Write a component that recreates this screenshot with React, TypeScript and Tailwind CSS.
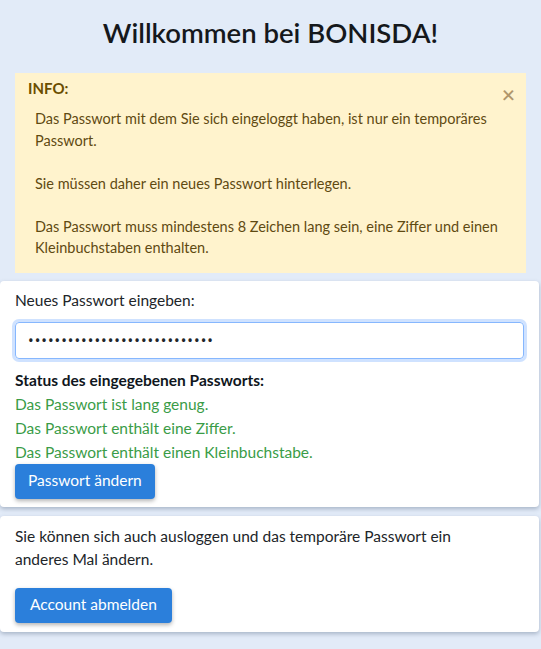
import React from "react";

const App = () => {
  const [password, setPassword] = React.useState("abcdefgh1234567890abcdefghij");

  const checks = [
    "Das Passwort ist lang genug.",
    "Das Passwort enthält eine Ziffer.",
    "Das Passwort enthält einen Kleinbuchstabe.",
  ];

  return (
    <div
      className="min-h-[649px] w-full bg-[#e2ebf8] pt-[16px] pb-4 text-[#212529]"
      style={{ fontFamily: 'Lato, "Noto Sans", sans-serif' }}
    >
      <h1 className="mb-[23px] text-center text-[27.5px] leading-[34px] font-semibold text-[#15181c]">
        Willkommen bei BONISDA!
      </h1>

      <div className="relative mx-[15px] mb-[8px] bg-[#fff3cd] px-[13px] pt-[4px] pb-[14px] text-[#664d03]">
        <div className="text-[15px] leading-[22px] font-bold text-[#6b4e00]">INFO:</div>
        <button
          type="button"
          className="absolute top-[10px] right-[11px] text-[23px] leading-none font-semibold text-[#b0966b]"
        >
          ×
        </button>
        <p className="mt-[9px] pl-[7px] pr-[10px] text-[14.5px] leading-[21.5px] text-[#5f4a12]">
          Das Passwort mit dem Sie sich eingeloggt haben, ist nur ein temporäres Passwort.
          <br />
          <br />
          Sie müssen daher ein neues Passwort hinterlegen.
          <br />
          <br />
          Das Passwort muss mindestens 8 Zeichen lang sein, eine Ziffer und einen Kleinbuchstaben enthalten.
        </p>
      </div>

      <div className="mr-[2px] mb-[9px] rounded-[4px] bg-white px-[15px] pt-[8px] pb-[8px] shadow-[0_2px_4px_rgba(60,80,110,0.35)]">
        <label htmlFor="pw" className="block text-[15.5px] leading-[22px]">
          Neues Passwort eingeben:
        </label>
        <input
          id="pw"
          type="password"
          value={password}
          onChange={(e) => setPassword(e.target.value)}
          style={{ fontFamily: '"Noto Sans", sans-serif' }}
          className="mt-[11px] h-[37px] w-full rounded-[4px] border border-[#86b7fe] px-[12px] text-[15px] tracking-[1px] outline-none shadow-[0_0_0_3px_rgba(13,110,253,0.2)]"
        />
        <div className="mt-[10px] text-[15.5px] leading-[22px] font-bold text-[#0f1620]">
          Status des eingegebenen Passworts:
        </div>
        {checks.map((c) => (
          <div key={c} className="mt-[2px] text-[15.5px] leading-[22px] text-[#3a9c47]">
            {c}
          </div>
        ))}
        <button
          type="button"
          className="mt-[1px] h-[35px] rounded-[4px] bg-[#2b7fdb] px-[13px] text-[15.5px] text-white shadow-[0_2px_4px_rgba(0,0,0,0.3)]"
        >
          Passwort ändern
        </button>
      </div>

      <div className="mr-[2px] rounded-[4px] bg-white px-[15px] pt-[9px] pb-[9px] shadow-[0_2px_4px_rgba(60,80,110,0.35)]">
        <p className="pr-[40px] text-[15.5px] leading-[23px]">
          Sie können sich auch ausloggen und das temporäre Passwort ein anderes Mal ändern.
        </p>
        <button
          type="button"
          className="mt-[17px] h-[35px] rounded-[4px] bg-[#2b7fdb] px-[15px] text-[15.5px] text-white shadow-[0_2px_4px_rgba(0,0,0,0.3)]"
        >
          Account abmelden
        </button>
      </div>
    </div>
  );
};

export default App;
